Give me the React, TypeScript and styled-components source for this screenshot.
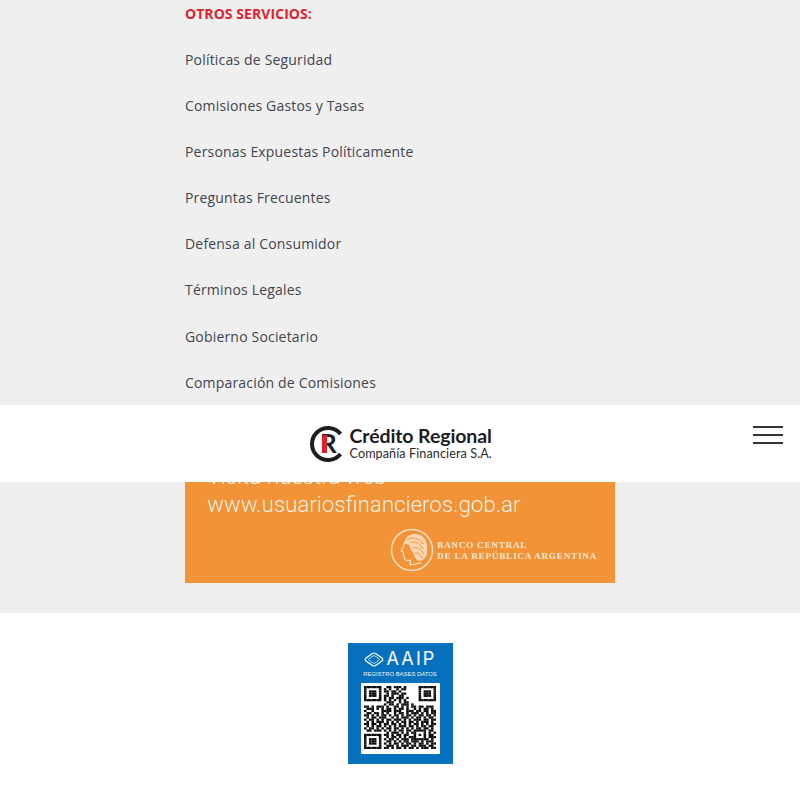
import React from 'react';
import styled, { createGlobalStyle } from 'styled-components';

const GlobalStyle = createGlobalStyle`
  html, body {
    margin: 0;
    padding: 0;
    background: #fff;
    font-family: "Open Sans", "Liberation Sans", sans-serif;
  }
`;

const Page = styled.div`
  position: relative;
  height: 800px;
  overflow: hidden;
`;

const GraySection = styled.section`
  background: #efefef;
  padding: 2px 0 30px;
`;

const Column = styled.div`
  width: 430px;
  margin: 0 auto;
`;

const LinkList = styled.ul`
  list-style: none;
  margin: 0;
  padding: 0;
`;

const LinkItem = styled.li<{ $heading?: boolean }>`
  height: 24px;
  margin-bottom: 22px;
  font-size: 14px;
  line-height: 24px;
  white-space: nowrap;
  color: ${props => (props.$heading ? '#e01f2f' : '#42454f')};
  font-weight: ${props => (props.$heading ? 700 : 400)};
  letter-spacing: ${props => (props.$heading ? '0.06px' : '0.18px')};

  &:nth-child(8) {
    margin-top: 23px;
  }
`;

const Banner = styled.div`
  height: 121px;
  padding: 45px 18px 0 22px;
  background: #f39337;
  display: flex;
  flex-direction: column;
  filter: blur(0.4px);
`;

const BannerLine = styled.div`
  height: 28px;
  font-family: Roboto, "Liberation Sans", sans-serif;
  font-size: 22.3px;
  font-weight: 300;
  line-height: 28px;
  white-space: nowrap;
  color: rgba(255, 255, 255, 0.9);
`;

const BankRow = styled.div`
  display: flex;
  align-items: center;
  justify-content: flex-end;
  gap: 3px;
  margin-top: 10px;
`;

const BankName = styled.div`
  margin-top: 1px;
  font-family: "Liberation Serif", serif;
  font-size: 9.2px;
  font-weight: 700;
  line-height: 11px;
  letter-spacing: 0.75px;
  white-space: nowrap;
  color: rgba(255, 255, 255, 0.8);
`;

const WhiteSection = styled.section`
  display: flex;
  justify-content: center;
  padding-top: 30px;
`;

const Badge = styled.div`
  width: 105px;
  height: 121px;
  padding-top: 7px;
  box-sizing: border-box;
  background: #0871bd;
  display: flex;
  flex-direction: column;
  align-items: center;
`;

const BadgeBrand = styled.div`
  display: flex;
  align-items: center;
  gap: 3px;
  height: 18px;
`;

const BadgeName = styled.span`
  font-family: Inter, "Liberation Sans", sans-serif;
  font-size: 18px;
  font-weight: 400;
  line-height: 18px;
  letter-spacing: 2.1px;
  color: #fff;
`;

const BadgeCaption = styled.div`
  margin-top: 2px;
  font-family: "Liberation Sans", sans-serif;
  font-size: 5.9px;
  line-height: 8px;
  white-space: nowrap;
  color: #eaf3fa;
`;

const QrBox = styled.div`
  width: 79px;
  height: 71px;
  margin-top: 5px;
  padding-bottom: 2px;
  box-sizing: border-box;
  background: #fff;
  border-radius: 1px;
  display: flex;
  align-items: center;
  justify-content: center;

  svg {
    filter: blur(0.35px);
  }
`;

const Header = styled.header`
  position: absolute;
  top: 405px;
  left: 0;
  right: 0;
  height: 77px;
  background: #fff;
  display: flex;
  align-items: center;
  justify-content: center;
`;

const Logo = styled.div`
  display: flex;
  align-items: center;
  gap: 4px;
`;

const LogoText = styled.div`
  display: flex;
  flex-direction: column;
  width: 141px;
  font-family: Lato, "Liberation Sans", sans-serif;
  white-space: nowrap;
  color: #1d1d1f;
`;

const LogoTitle = styled.span`
  font-size: 19.5px;
  font-weight: 700;
  line-height: 18px;
  letter-spacing: -0.1px;
`;

const LogoSubtitle = styled.span`
  margin-top: 1px;
  font-size: 12.6px;
  line-height: 15px;
  letter-spacing: 0.1px;
  color: #2b2b2d;
`;

const MenuButton = styled.button`
  position: absolute;
  top: 21px;
  right: 17px;
  width: 30px;
  height: 18px;
  padding: 0;
  border: 0;
  background: none;
  display: flex;
  flex-direction: column;
  justify-content: space-between;
`;

const MenuBar = styled.span`
  display: block;
  height: 2px;
  background: #333;
`;

const links = [
  'Políticas de Seguridad',
  'Comisiones Gastos y Tasas',
  'Personas Expuestas Políticamente',
  'Preguntas Frecuentes',
  'Defensa al Consumidor',
  'Términos Legales',
  'Gobierno Societario',
  'Comparación de Comisiones',
];

const qrRows = [
  '.........##.###.#............',
  '........#.#..#.##............',
  '........##.##.#..............',
  '.........#.###.##............',
  '........##.#..##.............',
  '........#.##.###.#...........',
  '........#.#.#.#.#............',
  '.........###..#.##...........',
  '........#.##.#.###.#.........',
  '##.#.###.#..##.#.#.##.##.###.',
  '.###.#.#.##.#.##.#..#.#.##.#.',
  '#..#...####.###..###.##.##.##',
  '.##.##.#.#..#.##.#.###.#.#.##',
  '##.#.#.##.#.##.#.##.#.##.##.#',
  '.#.##.###..#.#.###.#.##.#.##.',
  '#.##.#.#.##.###.#.#.###.##.##',
  '.#.#.###.#.#.#.##.##.#.###.#.',
  '##.##.#.##.##.#.#.#.##.#.#.##',
  '.#.#.##.#.#.#.###.##.#.##.##.',
  '#.##.#.#.##.##.#.#.#.##.##.#.',
  '.##.###.#.#.#.##.##.......##.',
  '.........#.###.#.#.#......#.#',
  '........##.#.##.##........##.',
  '.........#.##.#.#.##.##.#.###',
  '........#.##.#.###.#.##.##.#.',
  '.........##.#.#.##.###.#.###.',
  '........#.#.##.#.##.#.##.#.##',
  '.........###.#.###.##.###.##.',
  '........##.#.##.#.##.#.###.##',
];

const isFinderDark = (x: number, y: number) =>
  x === 0 || y === 0 || x === 6 || y === 6 || (x >= 2 && x <= 4 && y >= 2 && y <= 4);

const qrCell = (x: number, y: number) => {
  if (x < 8 && y < 8) return x < 7 && y < 7 && isFinderDark(x, y);
  if (x > 20 && y < 8) return x > 21 && y < 7 && isFinderDark(x - 22, y);
  if (x < 8 && y > 20) return x < 7 && y > 21 && isFinderDark(x, y - 22);
  if (x >= 20 && x <= 24 && y >= 20 && y <= 24) {
    return x === 20 || x === 24 || y === 20 || y === 24 || (x === 22 && y === 22);
  }
  return qrRows[y][x] === '#';
};

const QrCode = () => {
  const cells: React.ReactElement[] = [];
  for (let y = 0; y < 29; y++) {
    for (let x = 0; x < 29; x++) {
      if (qrCell(x, y)) cells.push(<rect key={`${x}-${y}`} x={x} y={y} width="1.02" height="1.02" />);
    }
  }
  return (
    <svg width="72" height="63" viewBox="0 0 29 29" preserveAspectRatio="none" fill="#0c0c0c">
      {cells}
    </svg>
  );
};

const LogoMark = () => (
  <svg width="36" height="38" viewBox="0 0 36 38">
    <path d="M30.500 9 A16 16 0 1 0 30.500 29" fill="none" stroke="#1d1d1f" strokeWidth="4" />
    <text x="10" y="28" fontFamily="Lato, sans-serif" fontWeight="700" fontSize="26" fill="#1d1d1f">R</text>
    <path d="M12 28 L12 13 Q12 9.500 17 9.500 L17 28 Z" fill="#e0202f" />
  </svg>
);

const CoinMark = () => (
  <svg width="44" height="44" viewBox="0 0 44 44" fill="none">
    <circle cx="22" cy="22" r="20.500" stroke="rgba(255,255,255,0.75)" strokeWidth="1.4" />
    {/* hair */}
    <path
      d="M14 15 C15 9 21 5 27 6 C34 7 38 14 37 22 C38 27 35 31 31 33 C27 33 24 30 24 26 C22 24 20 20 19 17 C17 16 15 16 14 15 Z"
      fill="rgba(255,255,255,0.62)"
    />
    <path
      d="M17 12 C22 8 29 10 33 16 M20 15 C24 12 30 15 33 21 M23 20 C26 18 31 21 34 26 M25 25 C28 24 31 27 32 30"
      stroke="#f39337"
      strokeWidth="1"
    />
    {/* face and neck */}
    <path
      d="M14 15 C14 18 13 20 11 23 L13.500 24 L13 27 L14.500 28.500 L14 31 C16 33 19 32.500 20.500 32 L20 37 L31 35"
      stroke="rgba(255,255,255,0.85)"
      strokeWidth="1"
    />
  </svg>
);

const AaipMark = () => (
  <svg width="20" height="15" viewBox="0 0 20 15" fill="none" stroke="#fff">
    <path d="M8.500 1.500 Q10 0.500 11.500 1.500 L18 6 Q19.500 7.500 18 9 L11.500 13.500 Q10 14.500 8.500 13.500 L2 9 Q0.500 7.500 2 6 Z" strokeWidth="1.2" />
    <path d="M9 4 Q10 3.400 11 4 L15 6.800 Q15.800 7.500 15 8.200 L11 11 Q10 11.600 9 11 L5 8.200 Q4.200 7.500 5 6.800 Z" strokeWidth="0.7" />
  </svg>
);

const App: React.FC = () => {
  return (
    <Page>
      <GlobalStyle />
      <GraySection>
        <Column>
          <LinkList>
            <LinkItem $heading>OTROS SERVICIOS:</LinkItem>
            {links.map(link => (
              <LinkItem key={link}>{link}</LinkItem>
            ))}
          </LinkList>
          <Banner>
            <BannerLine>Visita nuestra web</BannerLine>
            <BannerLine>www.usuariosfinancieros.gob.ar</BannerLine>
            <BankRow>
              <CoinMark />
              <BankName>
                BANCO CENTRAL
                <br />
                DE LA REPÚBLICA ARGENTINA
              </BankName>
            </BankRow>
          </Banner>
        </Column>
      </GraySection>
      <WhiteSection>
        <Badge>
          <BadgeBrand>
            <AaipMark />
            <BadgeName>AAIP</BadgeName>
          </BadgeBrand>
          <BadgeCaption>REGISTRO BASES DATOS</BadgeCaption>
          <QrBox>
            <QrCode />
          </QrBox>
        </Badge>
      </WhiteSection>
      <Header>
        <Logo>
          <LogoMark />
          <LogoText>
            <LogoTitle>Crédito Regional</LogoTitle>
            <LogoSubtitle>Compañía Financiera S.A.</LogoSubtitle>
          </LogoText>
        </Logo>
        <MenuButton aria-label="Menú">
          <MenuBar />
          <MenuBar />
          <MenuBar />
        </MenuButton>
      </Header>
    </Page>
  );
};

export default App;
